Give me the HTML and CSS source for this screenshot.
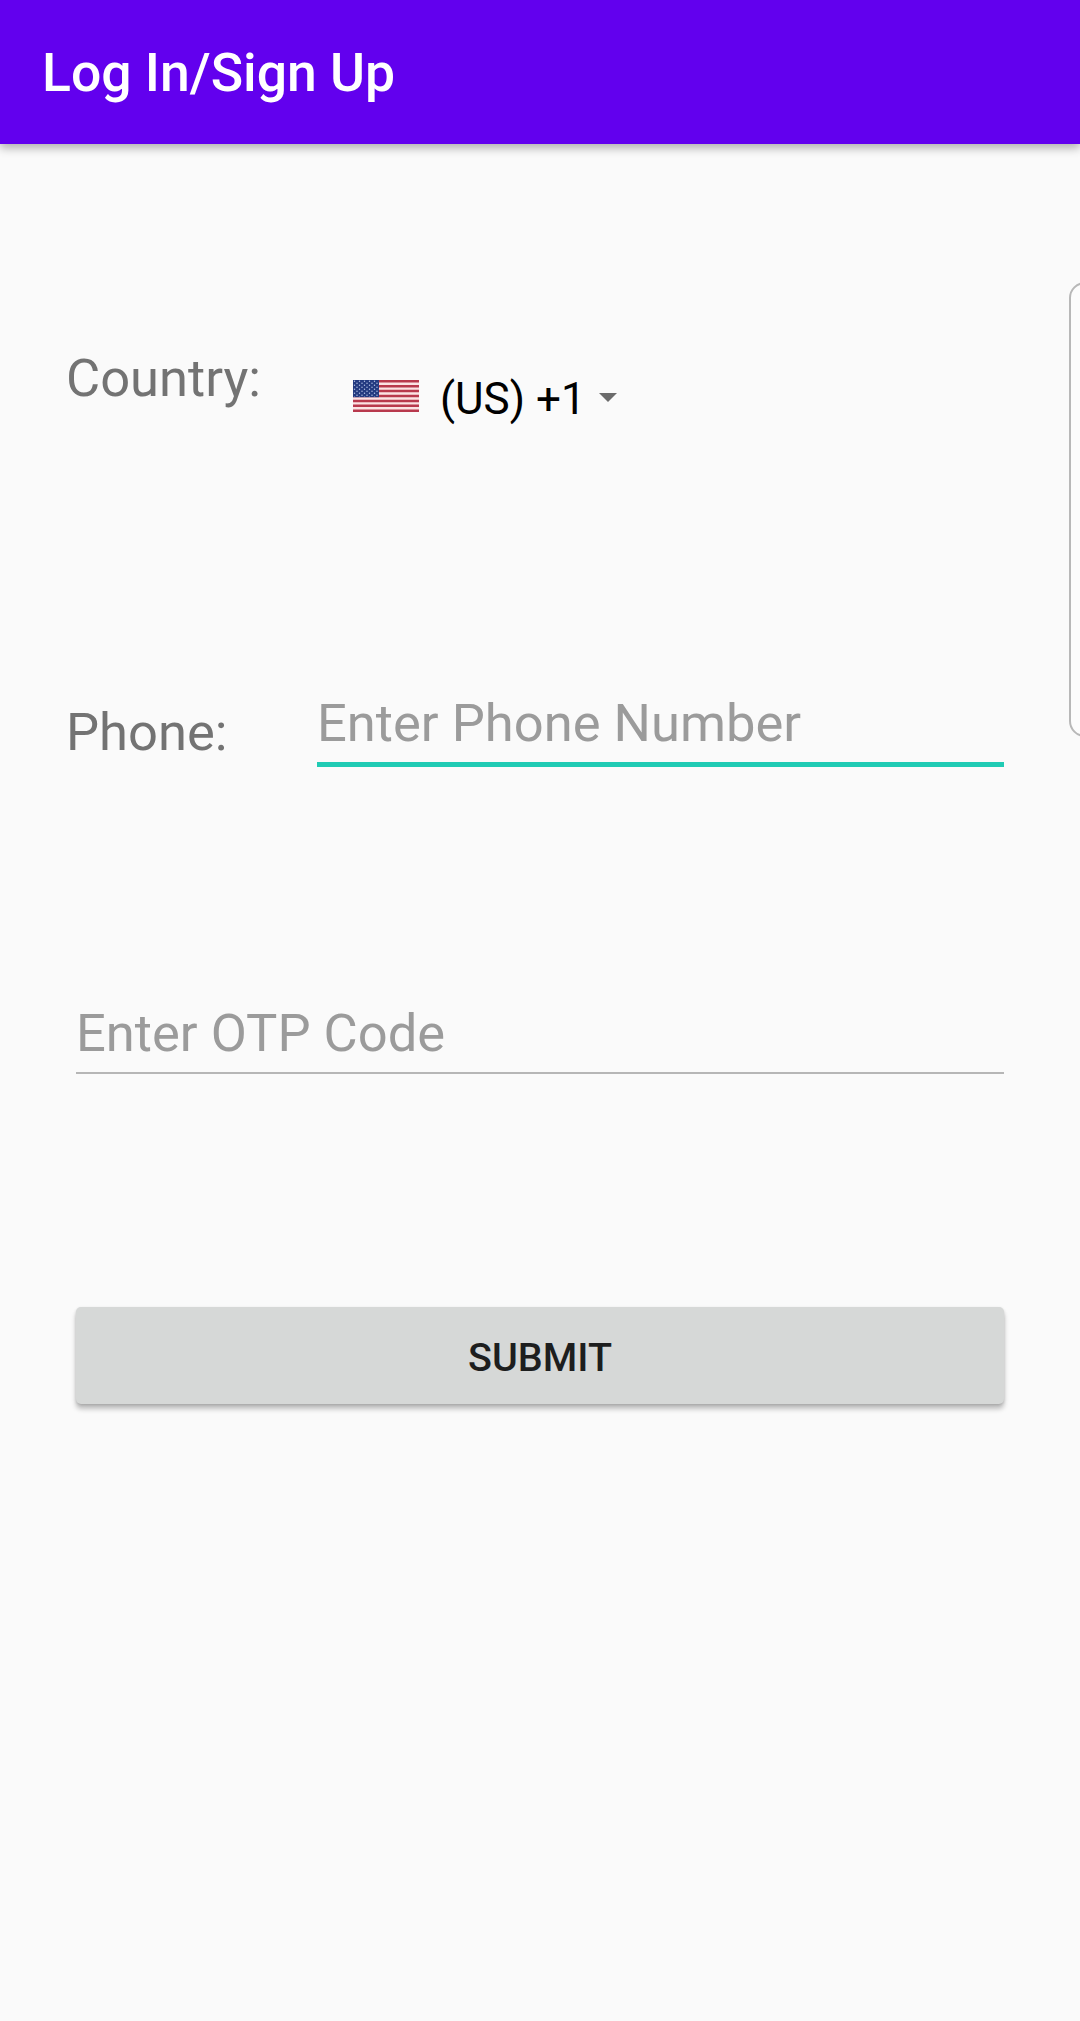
FILE: index.html
```html
<!DOCTYPE html>
<html lang="en">
<head>
    <meta charset="UTF-8">
    <meta name="viewport" content="width=device-width, initial-scale=1.0">
    <title>Log In/Sign Up</title>
    <link rel="stylesheet" href="styles.css">
</head>
<body>
    <header class="app-bar">
        <h1>Log In/Sign Up</h1>
    </header>
    <form class="login-form">
        <div class="row country-row">
            <span class="label">Country:</span>
            <div class="country-picker">
                <svg class="flag" viewBox="0 0 66 32" preserveAspectRatio="none">
                    <defs>
                        <pattern id="stars" width="5" height="4" patternUnits="userSpaceOnUse">
                            <circle cx="1.5" cy="1.2" r="0.7" fill="#b4c3e6"/>
                            <circle cx="4" cy="3.2" r="0.7" fill="#b4c3e6"/>
                        </pattern>
                    </defs>
                    <rect width="66" height="32" fill="#fbe3e4"/>
                    <path d="M0 1.23H66M0 6.15H66M0 11.08H66M0 16H66M0 20.92H66M0 25.85H66M0 30.77H66" stroke="#b8394d" stroke-width="2.46"/>
                    <rect width="26" height="17.2" fill="#233a80"/>
                    <rect width="26" height="17.2" fill="url(#stars)"/>
                </svg>
                <span class="code">(US) +1</span>
                <svg class="arrow" viewBox="0 0 18 9">
                    <path d="M0 0H18L9 9Z" fill="#6b6b6b"/>
                </svg>
            </div>
        </div>
        <div class="row phone-row">
            <label class="label" for="phone">Phone:</label>
            <input type="tel" id="phone" class="field active" placeholder="Enter Phone Number">
        </div>
        <input type="text" id="otp" class="field otp" placeholder="Enter OTP Code">
        <button type="button" class="submit-btn">SUBMIT</button>
    </form>
    <div class="edge-panel"></div>
</body>
</html>
```
FILE: styles.css
```css
body, html {
    margin: 0;
    padding: 0;
    font-family: Roboto, sans-serif;
    background-color: #fafafa;
}
body {
    position: relative;
    min-height: 2021px;
    overflow: hidden;
}
.app-bar {
    display: flex;
    align-items: center;
    height: 144px;
    padding: 0 42px;
    box-sizing: border-box;
    background-color: #6200ee;
    box-shadow: 0 4px 9px rgba(0, 0, 0, 0.3);
}
.app-bar h1 {
    margin: 2px 0 0;
    font-size: 53.5px;
    font-weight: 500;
    line-height: 62px;
    color: #fff;
}
.login-form {
    display: flex;
    flex-direction: column;
    padding: 204px 76px 0 66px;
}
.row {
    display: flex;
    align-items: flex-start;
}
.label {
    font-size: 52.5px;
    line-height: 60px;
    color: #737373;
}
.country-row {
    justify-content: flex-start;
    height: 344px;
}
.country-picker {
    display: flex;
    align-items: center;
    margin: 21px 0 0 92px;
}
.flag {
    width: 66px;
    height: 32px;
    margin-top: -6px;
}
.code {
    margin-left: 21px;
    font-size: 44px;
    line-height: 60px;
    color: #000;
}
.arrow {
    width: 18px;
    height: 9px;
    margin: -4px 0 0 13px;
}
.phone-row {
    justify-content: space-between;
    height: 307px;
}
.phone-row .label {
    margin-top: 10px;
}
.field {
    box-sizing: border-box;
    height: 75px;
    padding: 0 0 6px;
    border: none;
    border-bottom: 2px solid #b6b6b6;
    border-radius: 0;
    background: transparent;
    font-family: inherit;
    font-size: 52.5px;
    outline: none;
}
.field::placeholder {
    color: #9b9b9b;
    opacity: 1;
}
.field.active {
    width: 687px;
    padding-bottom: 8px;
    border-bottom: 5px solid #20cbb4;
}
.otp {
    margin-left: 10px;
}
.submit-btn {
    height: 97px;
    margin: 233px 0 0 10px;
    padding: 4px 0 0;
    border: none;
    border-radius: 5px;
    background-color: #d6d8d7;
    box-shadow: 0 5px 5px rgba(0, 0, 0, 0.24), 0 1px 3px rgba(0, 0, 0, 0.14);
    font-family: inherit;
    font-size: 39.5px;
    font-weight: 500;
    color: #1d1e1e;
}
/* handle peeking in from the right edge */
.edge-panel {
    position: absolute;
    top: 282px;
    right: -21px;
    width: 32px;
    height: 455px;
    box-sizing: border-box;
    border: 2px solid #b8b8b8;
    border-radius: 16px;
    background-color: #fcfcfc;
}
```
